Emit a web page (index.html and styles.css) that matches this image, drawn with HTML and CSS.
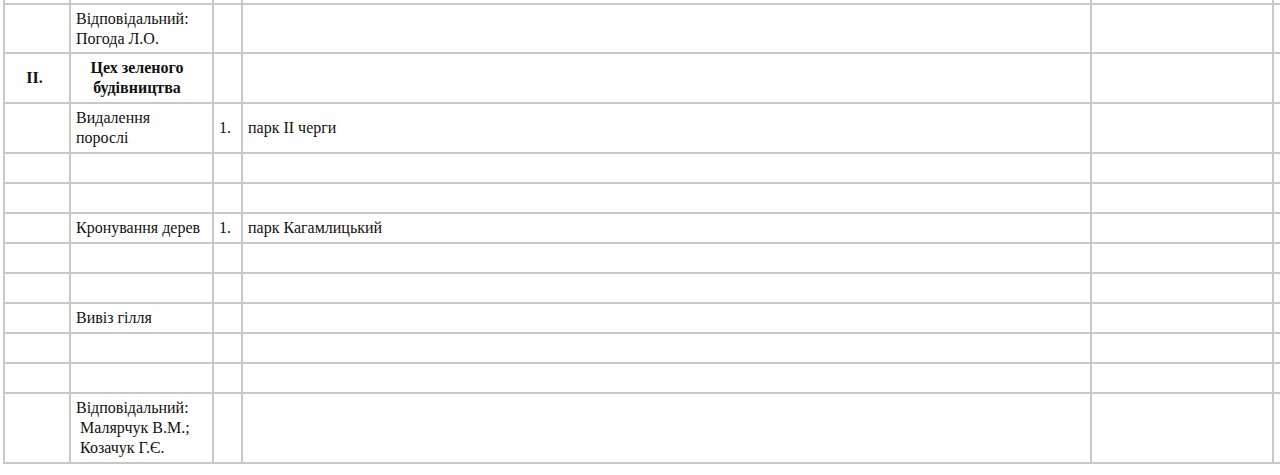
FILE: index.html
```html
<!DOCTYPE html>
<html lang="uk">
<head>
<meta charset="utf-8">
<title>План робіт</title>
<link rel="stylesheet" href="styles.css">
</head>
<body>
<div class="sheet">
  <div class="cell"></div><div class="cell"></div><div class="cell"></div><div class="cell"></div><div class="cell"></div><div class="cell"></div>

  <div class="cell"></div><div class="cell">Відповідальний:<br>Погода Л.О.</div><div class="cell"></div><div class="cell"></div><div class="cell"></div><div class="cell"></div>

  <div class="cell center bold num">II.</div><div class="cell center bold title">Цех зеленого<br>будівництва</div><div class="cell"></div><div class="cell"></div><div class="cell"></div><div class="cell"></div>

  <div class="cell"></div><div class="cell">Видалення<br>порослі</div><div class="cell">1.</div><div class="cell">парк II черги</div><div class="cell"></div><div class="cell"></div>

  <div class="cell"></div><div class="cell"></div><div class="cell"></div><div class="cell"></div><div class="cell"></div><div class="cell"></div>
  <div class="cell"></div><div class="cell"></div><div class="cell"></div><div class="cell"></div><div class="cell"></div><div class="cell"></div>

  <div class="cell"></div><div class="cell">Кронування дерев</div><div class="cell">1.</div><div class="cell">парк Кагамлицький</div><div class="cell"></div><div class="cell"></div>

  <div class="cell"></div><div class="cell"></div><div class="cell"></div><div class="cell"></div><div class="cell"></div><div class="cell"></div>
  <div class="cell"></div><div class="cell"></div><div class="cell"></div><div class="cell"></div><div class="cell"></div><div class="cell"></div>

  <div class="cell"></div><div class="cell">Вивіз гілля</div><div class="cell"></div><div class="cell"></div><div class="cell"></div><div class="cell"></div>

  <div class="cell"></div><div class="cell"></div><div class="cell"></div><div class="cell"></div><div class="cell"></div><div class="cell"></div>
  <div class="cell"></div><div class="cell"></div><div class="cell"></div><div class="cell"></div><div class="cell"></div><div class="cell"></div>

  <div class="cell"></div><div class="cell">Відповідальний:<br>&nbsp;Малярчук В.М.;<br>&nbsp;Козачук Г.Є.</div><div class="cell"></div><div class="cell"></div><div class="cell"></div><div class="cell"></div>
</div>
</body>
</html>
```

FILE: styles.css
```css
html, body {
  margin: 0;
  padding: 0;
  background: #ffffff;
  overflow: hidden;
}

body {
  font-family: "Liberation Serif", "Times New Roman", serif;
  font-size: 16px;
  line-height: 20px;
  color: #111111;
}

.sheet {
  display: grid;
  grid-template-columns: 64px 141px 27px 847px 180px 200px;
  grid-template-rows: 3px 47px 48px 48px 28px 28px 28px 28px 28px 28px 28px 28px 68px;
  gap: 2px;
  padding: 0 2px 2px 2px;
  margin-left: 3px;
  width: max-content;
  background: #c8c8c8;
}

.cell {
  background: #ffffff;
  display: flex;
  align-items: center;
  padding: 0 5px;
  overflow: hidden;
  white-space: nowrap;
}

.center {
  justify-content: center;
  text-align: center;
}

.bold {
  font-weight: bold;
}

.num {
  padding: 0 8px 0 3px;
}

.title {
  padding: 0 12px 0 3px;
}
```
